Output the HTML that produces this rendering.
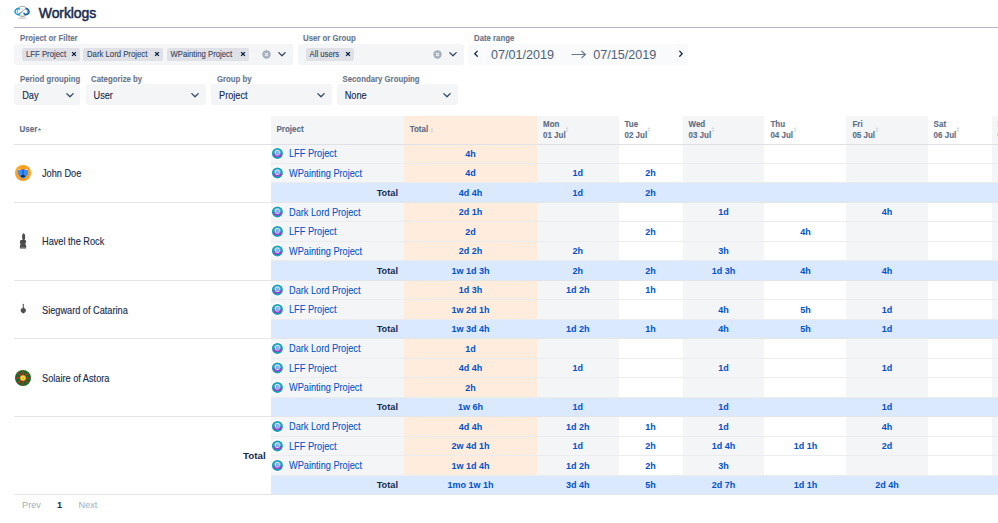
<!DOCTYPE html><html><head><meta charset="utf-8"><style>
*{box-sizing:border-box;margin:0;padding:0}
html,body{width:998px;height:523px;overflow:hidden;background:#fff;font-family:"Liberation Sans",sans-serif;position:relative}
.a{position:absolute}
.t{position:absolute;white-space:nowrap;line-height:1}
.lbl{font-size:7.8px;font-weight:700;color:#6b778c;transform:scaleY(1.12);transform-origin:0 65%;-webkit-text-stroke:0.12px #6b778c}
.box{position:absolute;background:#f4f5f7;border-radius:3px}
.chip{position:absolute;background:#dfe1e6;border-radius:2px;font-size:7.75px;color:#344563;line-height:13px;padding-left:4px;padding-top:0.4px;white-space:nowrap}
.chip span{display:inline-block;transform:scaleY(1.1);transform-origin:0 60%;-webkit-text-stroke:0.1px #344563}
.seltxt{font-size:9.2px;color:#172b4d;transform:scaleY(1.14);transform-origin:0 50%;-webkit-text-stroke:0.12px #172b4d}
.v{position:absolute;font-size:9px;font-weight:700;color:#0052cc;text-align:center;white-space:nowrap;line-height:19.5px;padding-top:0.5px}
.pn{position:absolute;font-size:9.2px;color:#0052cc;white-space:nowrap;line-height:19.5px;padding-top:1px;transform:scaleY(1.1);transform-origin:0 50%;-webkit-text-stroke:0.07px #0052cc}
.hd{font-size:8px;font-weight:700;color:#5e6c84;transform:scaleY(1.12);transform-origin:0 50%;-webkit-text-stroke:0.1px #5e6c84}
</style></head><body>
<svg class="a" style="left:10px;top:2px" width="26" height="22" viewBox="0 0 26 22">
<ellipse cx="12.2" cy="16.2" rx="4.2" ry="1.1" fill="#cfcfcf" opacity="0.8"/>
<circle cx="12.4" cy="9.3" r="5.1" fill="none" stroke="#a3a3a3" stroke-width="1.1"/>
<path d="M10 7.5 A2.9 2.9 0 1 0 10 11.7" fill="none" stroke="#1fa0de" stroke-width="1.4"/>
<path d="M9.4 11.8 L11.6 9.9" stroke="#39b0e8" stroke-width="1.3" stroke-linecap="round"/>
<path d="M10 12 L15.2 7" stroke="#a8a8a8" stroke-width="0.9"/>
<path d="M13.6 10.8 A2.8 2.8 0 1 0 15.4 7" fill="none" stroke="#0b5aa8" stroke-width="1.4"/>
<path d="M11.2 6.6 L13.4 8.6" stroke="#b0b0b0" stroke-width="0.8"/>
</svg>
<div class="t" style="left:38.8px;top:6px;font-size:14px;letter-spacing:-0.1px;-webkit-text-stroke:0.5px #172b4d;color:#172b4d">Worklogs</div>
<div class="a" style="left:14px;top:27px;width:984px;height:1px;background:#b3bac5"></div>
<div class="t lbl" style="left:20px;top:35.4px">Project or Filter</div>
<div class="t lbl" style="left:303px;top:35.4px">User or Group</div>
<div class="t lbl" style="left:474px;top:35.4px">Date range</div>
<div class="box" style="left:14px;top:44px;width:279px;height:21px"></div>
<div class="chip" style="left:22px;top:48px;width:58px;height:13px"><span>LFF Project</span></div>
<svg class="a" style="left:71px;top:51.2px" width="6" height="6" viewBox="0 0 6 6"><path d="M1.1 1.1L4.9 4.9M4.9 1.1L1.1 4.9" stroke="#091e42" stroke-width="1.3"/></svg>
<div class="chip" style="left:83px;top:48px;width:80px;height:13px"><span>Dark Lord Project</span></div>
<svg class="a" style="left:154px;top:51.2px" width="6" height="6" viewBox="0 0 6 6"><path d="M1.1 1.1L4.9 4.9M4.9 1.1L1.1 4.9" stroke="#091e42" stroke-width="1.3"/></svg>
<div class="chip" style="left:166.5px;top:48px;width:82px;height:13px"><span>WPainting Project</span></div>
<svg class="a" style="left:239.5px;top:51.2px" width="6" height="6" viewBox="0 0 6 6"><path d="M1.1 1.1L4.9 4.9M4.9 1.1L1.1 4.9" stroke="#091e42" stroke-width="1.3"/></svg>
<svg class="a" style="left:261.5px;top:50.0px" width="9" height="9" viewBox="0 0 9 9"><circle cx="4.5" cy="4.5" r="4.2" fill="#a5adba"/><path d="M2.9 2.9L6.1 6.1M6.1 2.9L2.9 6.1" stroke="#f4f5f7" stroke-width="1.1"/></svg>
<svg class="a" style="left:277px;top:51.0px" width="10" height="7" viewBox="0 0 10 7"><path d="M1.8 1.6L5 4.8L8.2 1.6" fill="none" stroke="#344563" stroke-width="1.3" stroke-linecap="round" stroke-linejoin="round"/></svg>
<div class="box" style="left:297.5px;top:44px;width:166px;height:21px"></div>
<div class="chip" style="left:305.5px;top:48px;width:48px;height:13px"><span>All users</span></div>
<svg class="a" style="left:344.5px;top:51.2px" width="6" height="6" viewBox="0 0 6 6"><path d="M1.1 1.1L4.9 4.9M4.9 1.1L1.1 4.9" stroke="#091e42" stroke-width="1.3"/></svg>
<svg class="a" style="left:432.5px;top:50.0px" width="9" height="9" viewBox="0 0 9 9"><circle cx="4.5" cy="4.5" r="4.2" fill="#a5adba"/><path d="M2.9 2.9L6.1 6.1M6.1 2.9L2.9 6.1" stroke="#f4f5f7" stroke-width="1.1"/></svg>
<svg class="a" style="left:448px;top:51.0px" width="10" height="7" viewBox="0 0 10 7"><path d="M1.8 1.6L5 4.8L8.2 1.6" fill="none" stroke="#344563" stroke-width="1.3" stroke-linecap="round" stroke-linejoin="round"/></svg>
<div class="box" style="left:468px;top:44px;width:14.5px;height:20.5px;border-radius:3px 0 0 3px;background:#f9fafb"></div>
<div class="box" style="left:483.5px;top:44px;width:189px;height:20.5px;border-radius:0;background:#f9fafb"></div>
<div class="box" style="left:673.5px;top:44px;width:14px;height:20.5px;border-radius:0 3px 3px 0;background:#f9fafb"></div>
<svg class="a" style="left:472.6px;top:50px" width="6" height="8" viewBox="0 0 6 8"><path d="M4.3 1.1L1.8 3.7L4.3 6.2" fill="none" stroke="#172b4d" stroke-width="1.3" stroke-linecap="round"/></svg>
<svg class="a" style="left:677.6px;top:50px" width="6" height="8" viewBox="0 0 6 8"><path d="M1.7 1.1L4.2 3.7L1.7 6.2" fill="none" stroke="#172b4d" stroke-width="1.3" stroke-linecap="round"/></svg>
<div class="t" style="left:491px;top:48.6px;font-size:12.6px;color:#505f79">07/01/2019</div>
<svg class="a" style="left:570.5px;top:50px" width="16" height="9" viewBox="0 0 16 9"><path d="M0.5 4.5H14.5M10.5 1L14.5 4.5L10.5 8" fill="none" stroke="#6b778c" stroke-width="1.1"/></svg>
<div class="t" style="left:593.3px;top:48.6px;font-size:12.6px;color:#505f79">07/15/2019</div>
<div class="t lbl" style="left:20px;top:75.9px">Period grouping</div>
<div class="t lbl" style="left:91px;top:75.9px">Categorize by</div>
<div class="t lbl" style="left:217px;top:75.9px">Group by</div>
<div class="t lbl" style="left:342.5px;top:75.9px">Secondary Grouping</div>
<div class="box" style="left:14px;top:84.3px;width:66px;height:21px"></div>
<div class="t seltxt" style="left:22.2px;top:91.6px">Day</div>
<svg class="a" style="left:65px;top:91.5px" width="10" height="7" viewBox="0 0 10 7"><path d="M1.8 1.6L5 4.8L8.2 1.6" fill="none" stroke="#344563" stroke-width="1.3" stroke-linecap="round" stroke-linejoin="round"/></svg>
<div class="box" style="left:85.5px;top:84.3px;width:120.5px;height:21px"></div>
<div class="t seltxt" style="left:93.5px;top:91.6px">User</div>
<svg class="a" style="left:190.2px;top:91.5px" width="10" height="7" viewBox="0 0 10 7"><path d="M1.8 1.6L5 4.8L8.2 1.6" fill="none" stroke="#344563" stroke-width="1.3" stroke-linecap="round" stroke-linejoin="round"/></svg>
<div class="box" style="left:211px;top:84.3px;width:120.80000000000001px;height:21px"></div>
<div class="t seltxt" style="left:219px;top:91.6px">Project</div>
<svg class="a" style="left:316px;top:91.5px" width="10" height="7" viewBox="0 0 10 7"><path d="M1.8 1.6L5 4.8L8.2 1.6" fill="none" stroke="#344563" stroke-width="1.3" stroke-linecap="round" stroke-linejoin="round"/></svg>
<div class="box" style="left:336.6px;top:84.3px;width:121.19999999999999px;height:21px"></div>
<div class="t seltxt" style="left:344.7px;top:91.6px">None</div>
<svg class="a" style="left:441.8px;top:91.5px" width="10" height="7" viewBox="0 0 10 7"><path d="M1.8 1.6L5 4.8L8.2 1.6" fill="none" stroke="#344563" stroke-width="1.3" stroke-linecap="round" stroke-linejoin="round"/></svg>
<div class="a" style="left:271px;top:116px;width:133px;height:28px;background:#f4f5f7"></div>
<div class="a" style="left:404px;top:116px;width:133px;height:28px;background:#ffecdc"></div>
<div class="a" style="left:537px;top:116px;width:81.5px;height:28px;background:#f4f5f7"></div>
<div class="a" style="left:618.5px;top:116px;width:64.0px;height:28px;background:#fff"></div>
<div class="a" style="left:682.5px;top:116px;width:81.89999999999998px;height:28px;background:#f4f5f7"></div>
<div class="a" style="left:764.4px;top:116px;width:82.0px;height:28px;background:#fff"></div>
<div class="a" style="left:846.4px;top:116px;width:81.20000000000005px;height:28px;background:#f4f5f7"></div>
<div class="a" style="left:927.6px;top:116px;width:64.39999999999998px;height:28px;background:#fff"></div>
<div class="a" style="left:992px;top:116px;width:68px;height:28px;background:#f4f5f7"></div>
<svg class="a" style="left:15.2px;top:164.8px" width="16" height="16" viewBox="0 0 16 16"><circle cx="8" cy="8" r="8" fill="#ffa01e"/><path d="M2.9 4.8 L5.2 5.2 L6.6 4.4 L9.4 4.4 L10.8 5.2 L13.1 4.8 L12.7 9.4 L10.8 12 L9.4 13.3 L6.6 13.3 L5.2 12 L3.3 9.4 Z" fill="#3a8cf2"/><rect x="7" y="4.4" width="2" height="5.6" fill="#1c6be6"/><path d="M3 4.3 L5.2 4.7 M13 4.3 L10.8 4.7" stroke="#fff3e0" stroke-width="0.8"/><ellipse cx="8" cy="11.2" rx="2.1" ry="1.1" fill="#13233a"/><path d="M6.8 12.2 L9.2 12.2 L8.8 13.4 L7.2 13.4 Z" fill="#2f86f0"/></svg>
<div class="t" style="left:42px;top:170.15px;font-size:9.2px;color:#172b4d;transform:scaleY(1.1);transform-origin:0 50%;-webkit-text-stroke:0.12px #172b4d">John Doe</div>
<div class="a" style="left:271px;top:144.0px;width:133px;height:19.5px;background:#f4f5f7"></div>
<div class="a" style="left:404px;top:144.0px;width:133px;height:19.5px;background:#ffecdc"></div>
<div class="a" style="left:537px;top:144.0px;width:81.5px;height:19.5px;background:#f4f5f7"></div>
<div class="a" style="left:682.5px;top:144.0px;width:81.89999999999998px;height:19.5px;background:#f4f5f7"></div>
<div class="a" style="left:846.4px;top:144.0px;width:81.20000000000005px;height:19.5px;background:#f4f5f7"></div>
<div class="a" style="left:992px;top:144.0px;width:68px;height:19.5px;background:#f4f5f7"></div>
<svg class="a" style="left:270px;top:146px" width="15" height="15" viewBox="0 0 15 15"><g transform="translate(0.40 0.40)"><circle cx="7" cy="7" r="6.8" fill="#fff"/><circle cx="7" cy="7" r="5.5" fill="#13a2b6"/><circle cx="7" cy="6.6" r="3.6" fill="#5fb8d8"/><ellipse cx="7" cy="8.5" rx="3.7" ry="2.2" fill="#9342c9"/><rect x="4.7" y="3.6" width="4.6" height="5.6" rx="2.2" fill="#eef4ff"/><rect x="5.4" y="4.3" width="3.2" height="4.2" rx="1.5" fill="#76aaf0"/><circle cx="7" cy="6.2" r="0.6" fill="#f0b0d8"/></g></svg>
<div class="pn" style="left:289px;top:144.0px">LFF Project</div>
<div class="v" style="left:404px;top:144.0px;width:133px">4h</div>
<div class="a" style="left:271px;top:162.5px;width:727px;height:1px;background:#ebecf0"></div>
<div class="a" style="left:271px;top:163.5px;width:133px;height:19.5px;background:#f4f5f7"></div>
<div class="a" style="left:404px;top:163.5px;width:133px;height:19.5px;background:#ffecdc"></div>
<div class="a" style="left:537px;top:163.5px;width:81.5px;height:19.5px;background:#f4f5f7"></div>
<div class="a" style="left:682.5px;top:163.5px;width:81.89999999999998px;height:19.5px;background:#f4f5f7"></div>
<div class="a" style="left:846.4px;top:163.5px;width:81.20000000000005px;height:19.5px;background:#f4f5f7"></div>
<div class="a" style="left:992px;top:163.5px;width:68px;height:19.5px;background:#f4f5f7"></div>
<svg class="a" style="left:270px;top:165px" width="15" height="15" viewBox="0 0 15 15"><g transform="translate(0.40 0.90)"><circle cx="7" cy="7" r="6.8" fill="#fff"/><circle cx="7" cy="7" r="5.5" fill="#13a2b6"/><circle cx="7" cy="6.6" r="3.6" fill="#5fb8d8"/><ellipse cx="7" cy="8.5" rx="3.7" ry="2.2" fill="#9342c9"/><rect x="4.7" y="3.6" width="4.6" height="5.6" rx="2.2" fill="#eef4ff"/><rect x="5.4" y="4.3" width="3.2" height="4.2" rx="1.5" fill="#76aaf0"/><circle cx="7" cy="6.2" r="0.6" fill="#f0b0d8"/></g></svg>
<div class="pn" style="left:289px;top:163.5px">WPainting Project</div>
<div class="v" style="left:404px;top:163.5px;width:133px">4d</div>
<div class="v" style="left:537px;top:163.5px;width:81.5px">1d</div>
<div class="v" style="left:618.5px;top:163.5px;width:64.0px">2h</div>
<div class="a" style="left:271px;top:182.0px;width:727px;height:1px;background:#ebecf0"></div>
<div class="a" style="left:271px;top:183.0px;width:727px;height:19.5px;background:#dae9fd"></div>
<div class="t" style="left:376.7px;top:188.5px;font-size:9.2px;font-weight:700;color:#172b4d">Total</div>
<div class="v" style="left:404px;top:183.0px;width:133px">4d 4h</div>
<div class="v" style="left:537px;top:183.0px;width:81.5px">1d</div>
<div class="v" style="left:618.5px;top:183.0px;width:64.0px">2h</div>
<div class="a" style="left:14px;top:201.5px;width:984px;height:1px;background:#e3e5e9"></div>
<svg class="a" style="left:10px;top:225px" width="20" height="30" viewBox="0 0 20 30"><path d="M13.7 8.2 C14.8 8.4 15.2 10 15.2 12 C15.2 13.8 14.8 14.8 14.4 15.2 L12.8 15.2 C12.2 14.4 12.1 13 12.1 11.6 C12.1 9.6 12.6 8.2 13.7 8.2 Z" fill="#4e4e4e"/><path d="M10.4 15.3 C11.6 14.9 15 14.9 16 15.5 L16.2 17.2 C15.3 17.9 15.1 18.8 15.6 19.8 L16.3 21.6 L16.1 23.6 L10 23.6 L9.8 21.5 C10.6 20.2 10.6 18.6 9.8 17.2 Z" fill="#484848"/><path d="M10.2 22.4 H15.8" stroke="#9a9a9a" stroke-width="0.6"/><path d="M11 18 H14.6 M11 20 H14.4" stroke="#666" stroke-width="0.5"/></svg>
<div class="t" style="left:42px;top:238.4px;font-size:9.2px;color:#172b4d;transform:scaleY(1.1);transform-origin:0 50%;-webkit-text-stroke:0.12px #172b4d">Havel the Rock</div>
<div class="a" style="left:271px;top:202.5px;width:133px;height:19.5px;background:#f4f5f7"></div>
<div class="a" style="left:404px;top:202.5px;width:133px;height:19.5px;background:#ffecdc"></div>
<div class="a" style="left:537px;top:202.5px;width:81.5px;height:19.5px;background:#f4f5f7"></div>
<div class="a" style="left:682.5px;top:202.5px;width:81.89999999999998px;height:19.5px;background:#f4f5f7"></div>
<div class="a" style="left:846.4px;top:202.5px;width:81.20000000000005px;height:19.5px;background:#f4f5f7"></div>
<div class="a" style="left:992px;top:202.5px;width:68px;height:19.5px;background:#f4f5f7"></div>
<svg class="a" style="left:270px;top:204px" width="15" height="15" viewBox="0 0 15 15"><g transform="translate(0.40 0.90)"><circle cx="7" cy="7" r="6.8" fill="#fff"/><circle cx="7" cy="7" r="5.5" fill="#13a2b6"/><circle cx="7" cy="6.6" r="3.6" fill="#5fb8d8"/><ellipse cx="7" cy="8.5" rx="3.7" ry="2.2" fill="#9342c9"/><rect x="4.7" y="3.6" width="4.6" height="5.6" rx="2.2" fill="#eef4ff"/><rect x="5.4" y="4.3" width="3.2" height="4.2" rx="1.5" fill="#76aaf0"/><circle cx="7" cy="6.2" r="0.6" fill="#f0b0d8"/></g></svg>
<div class="pn" style="left:289px;top:202.5px">Dark Lord Project</div>
<div class="v" style="left:404px;top:202.5px;width:133px">2d 1h</div>
<div class="v" style="left:682.5px;top:202.5px;width:81.89999999999998px">1d</div>
<div class="v" style="left:846.4px;top:202.5px;width:81.20000000000005px">4h</div>
<div class="a" style="left:271px;top:221.0px;width:727px;height:1px;background:#ebecf0"></div>
<div class="a" style="left:271px;top:222.0px;width:133px;height:19.5px;background:#f4f5f7"></div>
<div class="a" style="left:404px;top:222.0px;width:133px;height:19.5px;background:#ffecdc"></div>
<div class="a" style="left:537px;top:222.0px;width:81.5px;height:19.5px;background:#f4f5f7"></div>
<div class="a" style="left:682.5px;top:222.0px;width:81.89999999999998px;height:19.5px;background:#f4f5f7"></div>
<div class="a" style="left:846.4px;top:222.0px;width:81.20000000000005px;height:19.5px;background:#f4f5f7"></div>
<div class="a" style="left:992px;top:222.0px;width:68px;height:19.5px;background:#f4f5f7"></div>
<svg class="a" style="left:270px;top:224px" width="15" height="15" viewBox="0 0 15 15"><g transform="translate(0.40 0.40)"><circle cx="7" cy="7" r="6.8" fill="#fff"/><circle cx="7" cy="7" r="5.5" fill="#13a2b6"/><circle cx="7" cy="6.6" r="3.6" fill="#5fb8d8"/><ellipse cx="7" cy="8.5" rx="3.7" ry="2.2" fill="#9342c9"/><rect x="4.7" y="3.6" width="4.6" height="5.6" rx="2.2" fill="#eef4ff"/><rect x="5.4" y="4.3" width="3.2" height="4.2" rx="1.5" fill="#76aaf0"/><circle cx="7" cy="6.2" r="0.6" fill="#f0b0d8"/></g></svg>
<div class="pn" style="left:289px;top:222.0px">LFF Project</div>
<div class="v" style="left:404px;top:222.0px;width:133px">2d</div>
<div class="v" style="left:618.5px;top:222.0px;width:64.0px">2h</div>
<div class="v" style="left:764.4px;top:222.0px;width:82.0px">4h</div>
<div class="a" style="left:271px;top:240.5px;width:727px;height:1px;background:#ebecf0"></div>
<div class="a" style="left:271px;top:241.5px;width:133px;height:19.5px;background:#f4f5f7"></div>
<div class="a" style="left:404px;top:241.5px;width:133px;height:19.5px;background:#ffecdc"></div>
<div class="a" style="left:537px;top:241.5px;width:81.5px;height:19.5px;background:#f4f5f7"></div>
<div class="a" style="left:682.5px;top:241.5px;width:81.89999999999998px;height:19.5px;background:#f4f5f7"></div>
<div class="a" style="left:846.4px;top:241.5px;width:81.20000000000005px;height:19.5px;background:#f4f5f7"></div>
<div class="a" style="left:992px;top:241.5px;width:68px;height:19.5px;background:#f4f5f7"></div>
<svg class="a" style="left:270px;top:243px" width="15" height="15" viewBox="0 0 15 15"><g transform="translate(0.40 0.90)"><circle cx="7" cy="7" r="6.8" fill="#fff"/><circle cx="7" cy="7" r="5.5" fill="#13a2b6"/><circle cx="7" cy="6.6" r="3.6" fill="#5fb8d8"/><ellipse cx="7" cy="8.5" rx="3.7" ry="2.2" fill="#9342c9"/><rect x="4.7" y="3.6" width="4.6" height="5.6" rx="2.2" fill="#eef4ff"/><rect x="5.4" y="4.3" width="3.2" height="4.2" rx="1.5" fill="#76aaf0"/><circle cx="7" cy="6.2" r="0.6" fill="#f0b0d8"/></g></svg>
<div class="pn" style="left:289px;top:241.5px">WPainting Project</div>
<div class="v" style="left:404px;top:241.5px;width:133px">2d 2h</div>
<div class="v" style="left:537px;top:241.5px;width:81.5px">2h</div>
<div class="v" style="left:682.5px;top:241.5px;width:81.89999999999998px">3h</div>
<div class="a" style="left:271px;top:260.0px;width:727px;height:1px;background:#ebecf0"></div>
<div class="a" style="left:271px;top:261.0px;width:727px;height:19.5px;background:#dae9fd"></div>
<div class="t" style="left:376.7px;top:266.5px;font-size:9.2px;font-weight:700;color:#172b4d">Total</div>
<div class="v" style="left:404px;top:261.0px;width:133px">1w 1d 3h</div>
<div class="v" style="left:537px;top:261.0px;width:81.5px">2h</div>
<div class="v" style="left:618.5px;top:261.0px;width:64.0px">2h</div>
<div class="v" style="left:682.5px;top:261.0px;width:81.89999999999998px">1d 3h</div>
<div class="v" style="left:764.4px;top:261.0px;width:82.0px">4h</div>
<div class="v" style="left:846.4px;top:261.0px;width:81.20000000000005px">4h</div>
<div class="a" style="left:14px;top:279.5px;width:984px;height:1px;background:#e3e5e9"></div>
<svg class="a" style="left:10px;top:295px" width="20" height="30" viewBox="0 0 20 30"><path d="M13.3 9 V13" stroke="#4e4e4e" stroke-width="1"/><path d="M12.4 9.3 H14.2" stroke="#777" stroke-width="0.6"/><path d="M13.3 12.4 C15.2 13.2 16 14.2 16 15.4 C16 16.6 14.6 17.6 13.3 18.6 C12 17.6 10.6 16.6 10.6 15.4 C10.6 14.2 11.4 13.2 13.3 12.4 Z" fill="#505050"/></svg>
<div class="t" style="left:42px;top:306.65px;font-size:9.2px;color:#172b4d;transform:scaleY(1.1);transform-origin:0 50%;-webkit-text-stroke:0.12px #172b4d">Siegward of Catarina</div>
<div class="a" style="left:271px;top:280.5px;width:133px;height:19.5px;background:#f4f5f7"></div>
<div class="a" style="left:404px;top:280.5px;width:133px;height:19.5px;background:#ffecdc"></div>
<div class="a" style="left:537px;top:280.5px;width:81.5px;height:19.5px;background:#f4f5f7"></div>
<div class="a" style="left:682.5px;top:280.5px;width:81.89999999999998px;height:19.5px;background:#f4f5f7"></div>
<div class="a" style="left:846.4px;top:280.5px;width:81.20000000000005px;height:19.5px;background:#f4f5f7"></div>
<div class="a" style="left:992px;top:280.5px;width:68px;height:19.5px;background:#f4f5f7"></div>
<svg class="a" style="left:270px;top:282px" width="15" height="15" viewBox="0 0 15 15"><g transform="translate(0.40 0.90)"><circle cx="7" cy="7" r="6.8" fill="#fff"/><circle cx="7" cy="7" r="5.5" fill="#13a2b6"/><circle cx="7" cy="6.6" r="3.6" fill="#5fb8d8"/><ellipse cx="7" cy="8.5" rx="3.7" ry="2.2" fill="#9342c9"/><rect x="4.7" y="3.6" width="4.6" height="5.6" rx="2.2" fill="#eef4ff"/><rect x="5.4" y="4.3" width="3.2" height="4.2" rx="1.5" fill="#76aaf0"/><circle cx="7" cy="6.2" r="0.6" fill="#f0b0d8"/></g></svg>
<div class="pn" style="left:289px;top:280.5px">Dark Lord Project</div>
<div class="v" style="left:404px;top:280.5px;width:133px">1d 3h</div>
<div class="v" style="left:537px;top:280.5px;width:81.5px">1d 2h</div>
<div class="v" style="left:618.5px;top:280.5px;width:64.0px">1h</div>
<div class="a" style="left:271px;top:299.0px;width:727px;height:1px;background:#ebecf0"></div>
<div class="a" style="left:271px;top:300.0px;width:133px;height:19.5px;background:#f4f5f7"></div>
<div class="a" style="left:404px;top:300.0px;width:133px;height:19.5px;background:#ffecdc"></div>
<div class="a" style="left:537px;top:300.0px;width:81.5px;height:19.5px;background:#f4f5f7"></div>
<div class="a" style="left:682.5px;top:300.0px;width:81.89999999999998px;height:19.5px;background:#f4f5f7"></div>
<div class="a" style="left:846.4px;top:300.0px;width:81.20000000000005px;height:19.5px;background:#f4f5f7"></div>
<div class="a" style="left:992px;top:300.0px;width:68px;height:19.5px;background:#f4f5f7"></div>
<svg class="a" style="left:270px;top:302px" width="15" height="15" viewBox="0 0 15 15"><g transform="translate(0.40 0.40)"><circle cx="7" cy="7" r="6.8" fill="#fff"/><circle cx="7" cy="7" r="5.5" fill="#13a2b6"/><circle cx="7" cy="6.6" r="3.6" fill="#5fb8d8"/><ellipse cx="7" cy="8.5" rx="3.7" ry="2.2" fill="#9342c9"/><rect x="4.7" y="3.6" width="4.6" height="5.6" rx="2.2" fill="#eef4ff"/><rect x="5.4" y="4.3" width="3.2" height="4.2" rx="1.5" fill="#76aaf0"/><circle cx="7" cy="6.2" r="0.6" fill="#f0b0d8"/></g></svg>
<div class="pn" style="left:289px;top:300.0px">LFF Project</div>
<div class="v" style="left:404px;top:300.0px;width:133px">1w 2d 1h</div>
<div class="v" style="left:682.5px;top:300.0px;width:81.89999999999998px">4h</div>
<div class="v" style="left:764.4px;top:300.0px;width:82.0px">5h</div>
<div class="v" style="left:846.4px;top:300.0px;width:81.20000000000005px">1d</div>
<div class="a" style="left:271px;top:318.5px;width:727px;height:1px;background:#ebecf0"></div>
<div class="a" style="left:271px;top:319.5px;width:727px;height:19.5px;background:#dae9fd"></div>
<div class="t" style="left:376.7px;top:325.0px;font-size:9.2px;font-weight:700;color:#172b4d">Total</div>
<div class="v" style="left:404px;top:319.5px;width:133px">1w 3d 4h</div>
<div class="v" style="left:537px;top:319.5px;width:81.5px">1d 2h</div>
<div class="v" style="left:618.5px;top:319.5px;width:64.0px">1h</div>
<div class="v" style="left:682.5px;top:319.5px;width:81.89999999999998px">4h</div>
<div class="v" style="left:764.4px;top:319.5px;width:82.0px">5h</div>
<div class="v" style="left:846.4px;top:319.5px;width:81.20000000000005px">1d</div>
<div class="a" style="left:14px;top:338.0px;width:984px;height:1px;background:#e3e5e9"></div>
<svg class="a" style="left:15.2px;top:369.8px" width="16" height="16" viewBox="0 0 16 16"><circle cx="8" cy="8" r="8" fill="#136b2a"/><path d="M8 8 L8.00 0.60" stroke="#d9261c" stroke-width="1.2"/><path d="M8 8 L13.23 2.77" stroke="#d9261c" stroke-width="1.2"/><path d="M8 8 L15.40 8.00" stroke="#d9261c" stroke-width="1.2"/><path d="M8 8 L13.23 13.23" stroke="#d9261c" stroke-width="1.2"/><path d="M8 8 L8.00 15.40" stroke="#d9261c" stroke-width="1.2"/><path d="M8 8 L2.77 13.23" stroke="#d9261c" stroke-width="1.2"/><path d="M8 8 L0.60 8.00" stroke="#d9261c" stroke-width="1.2"/><path d="M8 8 L2.77 2.77" stroke="#d9261c" stroke-width="1.2"/><circle cx="8" cy="8" r="2.8" fill="#f5d53c"/><path d="M7 8 L8 9 L9.4 6.8" fill="none" stroke="#c9a21a" stroke-width="0.6"/></svg>
<div class="t" style="left:42px;top:374.9px;font-size:9.2px;color:#172b4d;transform:scaleY(1.1);transform-origin:0 50%;-webkit-text-stroke:0.12px #172b4d">Solaire of Astora</div>
<div class="a" style="left:271px;top:339.0px;width:133px;height:19.5px;background:#f4f5f7"></div>
<div class="a" style="left:404px;top:339.0px;width:133px;height:19.5px;background:#ffecdc"></div>
<div class="a" style="left:537px;top:339.0px;width:81.5px;height:19.5px;background:#f4f5f7"></div>
<div class="a" style="left:682.5px;top:339.0px;width:81.89999999999998px;height:19.5px;background:#f4f5f7"></div>
<div class="a" style="left:846.4px;top:339.0px;width:81.20000000000005px;height:19.5px;background:#f4f5f7"></div>
<div class="a" style="left:992px;top:339.0px;width:68px;height:19.5px;background:#f4f5f7"></div>
<svg class="a" style="left:270px;top:341px" width="15" height="15" viewBox="0 0 15 15"><g transform="translate(0.40 0.40)"><circle cx="7" cy="7" r="6.8" fill="#fff"/><circle cx="7" cy="7" r="5.5" fill="#13a2b6"/><circle cx="7" cy="6.6" r="3.6" fill="#5fb8d8"/><ellipse cx="7" cy="8.5" rx="3.7" ry="2.2" fill="#9342c9"/><rect x="4.7" y="3.6" width="4.6" height="5.6" rx="2.2" fill="#eef4ff"/><rect x="5.4" y="4.3" width="3.2" height="4.2" rx="1.5" fill="#76aaf0"/><circle cx="7" cy="6.2" r="0.6" fill="#f0b0d8"/></g></svg>
<div class="pn" style="left:289px;top:339.0px">Dark Lord Project</div>
<div class="v" style="left:404px;top:339.0px;width:133px">1d</div>
<div class="a" style="left:271px;top:357.5px;width:727px;height:1px;background:#ebecf0"></div>
<div class="a" style="left:271px;top:358.5px;width:133px;height:19.5px;background:#f4f5f7"></div>
<div class="a" style="left:404px;top:358.5px;width:133px;height:19.5px;background:#ffecdc"></div>
<div class="a" style="left:537px;top:358.5px;width:81.5px;height:19.5px;background:#f4f5f7"></div>
<div class="a" style="left:682.5px;top:358.5px;width:81.89999999999998px;height:19.5px;background:#f4f5f7"></div>
<div class="a" style="left:846.4px;top:358.5px;width:81.20000000000005px;height:19.5px;background:#f4f5f7"></div>
<div class="a" style="left:992px;top:358.5px;width:68px;height:19.5px;background:#f4f5f7"></div>
<svg class="a" style="left:270px;top:360px" width="15" height="15" viewBox="0 0 15 15"><g transform="translate(0.40 0.90)"><circle cx="7" cy="7" r="6.8" fill="#fff"/><circle cx="7" cy="7" r="5.5" fill="#13a2b6"/><circle cx="7" cy="6.6" r="3.6" fill="#5fb8d8"/><ellipse cx="7" cy="8.5" rx="3.7" ry="2.2" fill="#9342c9"/><rect x="4.7" y="3.6" width="4.6" height="5.6" rx="2.2" fill="#eef4ff"/><rect x="5.4" y="4.3" width="3.2" height="4.2" rx="1.5" fill="#76aaf0"/><circle cx="7" cy="6.2" r="0.6" fill="#f0b0d8"/></g></svg>
<div class="pn" style="left:289px;top:358.5px">LFF Project</div>
<div class="v" style="left:404px;top:358.5px;width:133px">4d 4h</div>
<div class="v" style="left:537px;top:358.5px;width:81.5px">1d</div>
<div class="v" style="left:682.5px;top:358.5px;width:81.89999999999998px">1d</div>
<div class="v" style="left:846.4px;top:358.5px;width:81.20000000000005px">1d</div>
<div class="a" style="left:271px;top:377.0px;width:727px;height:1px;background:#ebecf0"></div>
<div class="a" style="left:271px;top:378.0px;width:133px;height:19.5px;background:#f4f5f7"></div>
<div class="a" style="left:404px;top:378.0px;width:133px;height:19.5px;background:#ffecdc"></div>
<div class="a" style="left:537px;top:378.0px;width:81.5px;height:19.5px;background:#f4f5f7"></div>
<div class="a" style="left:682.5px;top:378.0px;width:81.89999999999998px;height:19.5px;background:#f4f5f7"></div>
<div class="a" style="left:846.4px;top:378.0px;width:81.20000000000005px;height:19.5px;background:#f4f5f7"></div>
<div class="a" style="left:992px;top:378.0px;width:68px;height:19.5px;background:#f4f5f7"></div>
<svg class="a" style="left:270px;top:380px" width="15" height="15" viewBox="0 0 15 15"><g transform="translate(0.40 0.40)"><circle cx="7" cy="7" r="6.8" fill="#fff"/><circle cx="7" cy="7" r="5.5" fill="#13a2b6"/><circle cx="7" cy="6.6" r="3.6" fill="#5fb8d8"/><ellipse cx="7" cy="8.5" rx="3.7" ry="2.2" fill="#9342c9"/><rect x="4.7" y="3.6" width="4.6" height="5.6" rx="2.2" fill="#eef4ff"/><rect x="5.4" y="4.3" width="3.2" height="4.2" rx="1.5" fill="#76aaf0"/><circle cx="7" cy="6.2" r="0.6" fill="#f0b0d8"/></g></svg>
<div class="pn" style="left:289px;top:378.0px">WPainting Project</div>
<div class="v" style="left:404px;top:378.0px;width:133px">2h</div>
<div class="a" style="left:271px;top:396.5px;width:727px;height:1px;background:#ebecf0"></div>
<div class="a" style="left:271px;top:397.5px;width:727px;height:19.5px;background:#dae9fd"></div>
<div class="t" style="left:376.7px;top:403.0px;font-size:9.2px;font-weight:700;color:#172b4d">Total</div>
<div class="v" style="left:404px;top:397.5px;width:133px">1w 6h</div>
<div class="v" style="left:537px;top:397.5px;width:81.5px">1d</div>
<div class="v" style="left:682.5px;top:397.5px;width:81.89999999999998px">1d</div>
<div class="v" style="left:846.4px;top:397.5px;width:81.20000000000005px">1d</div>
<div class="a" style="left:14px;top:416.0px;width:984px;height:1px;background:#e3e5e9"></div>
<div class="t" style="left:243px;top:451.2px;font-size:9.8px;font-weight:700;color:#172b4d">Total</div>
<div class="a" style="left:271px;top:417.0px;width:133px;height:19.5px;background:#f4f5f7"></div>
<div class="a" style="left:404px;top:417.0px;width:133px;height:19.5px;background:#ffecdc"></div>
<div class="a" style="left:537px;top:417.0px;width:81.5px;height:19.5px;background:#f4f5f7"></div>
<div class="a" style="left:682.5px;top:417.0px;width:81.89999999999998px;height:19.5px;background:#f4f5f7"></div>
<div class="a" style="left:846.4px;top:417.0px;width:81.20000000000005px;height:19.5px;background:#f4f5f7"></div>
<div class="a" style="left:992px;top:417.0px;width:68px;height:19.5px;background:#f4f5f7"></div>
<svg class="a" style="left:270px;top:419px" width="15" height="15" viewBox="0 0 15 15"><g transform="translate(0.40 0.40)"><circle cx="7" cy="7" r="6.8" fill="#fff"/><circle cx="7" cy="7" r="5.5" fill="#13a2b6"/><circle cx="7" cy="6.6" r="3.6" fill="#5fb8d8"/><ellipse cx="7" cy="8.5" rx="3.7" ry="2.2" fill="#9342c9"/><rect x="4.7" y="3.6" width="4.6" height="5.6" rx="2.2" fill="#eef4ff"/><rect x="5.4" y="4.3" width="3.2" height="4.2" rx="1.5" fill="#76aaf0"/><circle cx="7" cy="6.2" r="0.6" fill="#f0b0d8"/></g></svg>
<div class="pn" style="left:289px;top:417.0px">Dark Lord Project</div>
<div class="v" style="left:404px;top:417.0px;width:133px">4d 4h</div>
<div class="v" style="left:537px;top:417.0px;width:81.5px">1d 2h</div>
<div class="v" style="left:618.5px;top:417.0px;width:64.0px">1h</div>
<div class="v" style="left:682.5px;top:417.0px;width:81.89999999999998px">1d</div>
<div class="v" style="left:846.4px;top:417.0px;width:81.20000000000005px">4h</div>
<div class="a" style="left:271px;top:435.5px;width:727px;height:1px;background:#ebecf0"></div>
<div class="a" style="left:271px;top:436.5px;width:133px;height:19.5px;background:#f4f5f7"></div>
<div class="a" style="left:404px;top:436.5px;width:133px;height:19.5px;background:#ffecdc"></div>
<div class="a" style="left:537px;top:436.5px;width:81.5px;height:19.5px;background:#f4f5f7"></div>
<div class="a" style="left:682.5px;top:436.5px;width:81.89999999999998px;height:19.5px;background:#f4f5f7"></div>
<div class="a" style="left:846.4px;top:436.5px;width:81.20000000000005px;height:19.5px;background:#f4f5f7"></div>
<div class="a" style="left:992px;top:436.5px;width:68px;height:19.5px;background:#f4f5f7"></div>
<svg class="a" style="left:270px;top:438px" width="15" height="15" viewBox="0 0 15 15"><g transform="translate(0.40 0.90)"><circle cx="7" cy="7" r="6.8" fill="#fff"/><circle cx="7" cy="7" r="5.5" fill="#13a2b6"/><circle cx="7" cy="6.6" r="3.6" fill="#5fb8d8"/><ellipse cx="7" cy="8.5" rx="3.7" ry="2.2" fill="#9342c9"/><rect x="4.7" y="3.6" width="4.6" height="5.6" rx="2.2" fill="#eef4ff"/><rect x="5.4" y="4.3" width="3.2" height="4.2" rx="1.5" fill="#76aaf0"/><circle cx="7" cy="6.2" r="0.6" fill="#f0b0d8"/></g></svg>
<div class="pn" style="left:289px;top:436.5px">LFF Project</div>
<div class="v" style="left:404px;top:436.5px;width:133px">2w 4d 1h</div>
<div class="v" style="left:537px;top:436.5px;width:81.5px">1d</div>
<div class="v" style="left:618.5px;top:436.5px;width:64.0px">2h</div>
<div class="v" style="left:682.5px;top:436.5px;width:81.89999999999998px">1d 4h</div>
<div class="v" style="left:764.4px;top:436.5px;width:82.0px">1d 1h</div>
<div class="v" style="left:846.4px;top:436.5px;width:81.20000000000005px">2d</div>
<div class="a" style="left:271px;top:455.0px;width:727px;height:1px;background:#ebecf0"></div>
<div class="a" style="left:271px;top:456.0px;width:133px;height:19.5px;background:#f4f5f7"></div>
<div class="a" style="left:404px;top:456.0px;width:133px;height:19.5px;background:#ffecdc"></div>
<div class="a" style="left:537px;top:456.0px;width:81.5px;height:19.5px;background:#f4f5f7"></div>
<div class="a" style="left:682.5px;top:456.0px;width:81.89999999999998px;height:19.5px;background:#f4f5f7"></div>
<div class="a" style="left:846.4px;top:456.0px;width:81.20000000000005px;height:19.5px;background:#f4f5f7"></div>
<div class="a" style="left:992px;top:456.0px;width:68px;height:19.5px;background:#f4f5f7"></div>
<svg class="a" style="left:270px;top:458px" width="15" height="15" viewBox="0 0 15 15"><g transform="translate(0.40 0.40)"><circle cx="7" cy="7" r="6.8" fill="#fff"/><circle cx="7" cy="7" r="5.5" fill="#13a2b6"/><circle cx="7" cy="6.6" r="3.6" fill="#5fb8d8"/><ellipse cx="7" cy="8.5" rx="3.7" ry="2.2" fill="#9342c9"/><rect x="4.7" y="3.6" width="4.6" height="5.6" rx="2.2" fill="#eef4ff"/><rect x="5.4" y="4.3" width="3.2" height="4.2" rx="1.5" fill="#76aaf0"/><circle cx="7" cy="6.2" r="0.6" fill="#f0b0d8"/></g></svg>
<div class="pn" style="left:289px;top:456.0px">WPainting Project</div>
<div class="v" style="left:404px;top:456.0px;width:133px">1w 1d 4h</div>
<div class="v" style="left:537px;top:456.0px;width:81.5px">1d 2h</div>
<div class="v" style="left:618.5px;top:456.0px;width:64.0px">2h</div>
<div class="v" style="left:682.5px;top:456.0px;width:81.89999999999998px">3h</div>
<div class="a" style="left:271px;top:474.5px;width:727px;height:1px;background:#ebecf0"></div>
<div class="a" style="left:271px;top:475.5px;width:727px;height:19.5px;background:#dae9fd"></div>
<div class="t" style="left:376.7px;top:481.0px;font-size:9.2px;font-weight:700;color:#172b4d">Total</div>
<div class="v" style="left:404px;top:475.5px;width:133px">1mo 1w 1h</div>
<div class="v" style="left:537px;top:475.5px;width:81.5px">3d 4h</div>
<div class="v" style="left:618.5px;top:475.5px;width:64.0px">5h</div>
<div class="v" style="left:682.5px;top:475.5px;width:81.89999999999998px">2d 7h</div>
<div class="v" style="left:764.4px;top:475.5px;width:82.0px">1d 1h</div>
<div class="v" style="left:846.4px;top:475.5px;width:81.20000000000005px">2d 4h</div>
<div class="a" style="left:14px;top:494.0px;width:984px;height:1px;background:#e3e5e9"></div>
<div class="a" style="left:14px;top:144px;width:984px;height:1px;background:#dfe1e6"></div>
<div class="t hd" style="left:19.5px;top:126px">User</div>
<svg class="a" style="left:37.2px;top:126.6px" width="5" height="7" viewBox="0 0 5 7"><path d="M0.5 3.2L2.5 1.2L4.5 3.2Z" fill="#5e6c84"/><path d="M1 4.3L2.5 5.6L4 4.3Z" fill="#dfe1e6"/></svg>
<div class="t hd" style="left:276.5px;top:126px">Project</div>
<div class="t hd" style="left:409.7px;top:126px">Total</div>
<svg class="a" style="left:430px;top:127px" width="4" height="7" viewBox="0 0 4 7"><path d="M0.5 2.8L2 1.2L3.5 2.8Z M0.5 4.2L2 5.8L3.5 4.2Z" fill="#c1c7d0"/></svg>
<div class="t hd" style="left:543px;top:121.4px;color:#5e6c84">Mon</div>
<div class="t hd" style="left:543px;top:132.4px;color:#5e6c84">01 Jul</div>
<svg class="a" style="left:565.2px;top:125.5px" width="4" height="7" viewBox="0 0 4 7"><path d="M0.5 2.8L2 1.2L3.5 2.8Z M0.5 4.2L2 5.8L3.5 4.2Z" fill="#c1c7d0"/></svg>
<div class="t hd" style="left:624.5px;top:121.4px;color:#5e6c84">Tue</div>
<div class="t hd" style="left:624.5px;top:132.4px;color:#5e6c84">02 Jul</div>
<svg class="a" style="left:646.7px;top:125.5px" width="4" height="7" viewBox="0 0 4 7"><path d="M0.5 2.8L2 1.2L3.5 2.8Z M0.5 4.2L2 5.8L3.5 4.2Z" fill="#c1c7d0"/></svg>
<div class="t hd" style="left:688.5px;top:121.4px;color:#5e6c84">Wed</div>
<div class="t hd" style="left:688.5px;top:132.4px;color:#5e6c84">03 Jul</div>
<svg class="a" style="left:710.7px;top:125.5px" width="4" height="7" viewBox="0 0 4 7"><path d="M0.5 2.8L2 1.2L3.5 2.8Z M0.5 4.2L2 5.8L3.5 4.2Z" fill="#c1c7d0"/></svg>
<div class="t hd" style="left:770.4px;top:121.4px;color:#5e6c84">Thu</div>
<div class="t hd" style="left:770.4px;top:132.4px;color:#5e6c84">04 Jul</div>
<svg class="a" style="left:792.6px;top:125.5px" width="4" height="7" viewBox="0 0 4 7"><path d="M0.5 2.8L2 1.2L3.5 2.8Z M0.5 4.2L2 5.8L3.5 4.2Z" fill="#c1c7d0"/></svg>
<div class="t hd" style="left:852.4px;top:121.4px;color:#5e6c84">Fri</div>
<div class="t hd" style="left:852.4px;top:132.4px;color:#5e6c84">05 Jul</div>
<svg class="a" style="left:874.6px;top:125.5px" width="4" height="7" viewBox="0 0 4 7"><path d="M0.5 2.8L2 1.2L3.5 2.8Z M0.5 4.2L2 5.8L3.5 4.2Z" fill="#c1c7d0"/></svg>
<div class="t hd" style="left:933.6px;top:121.4px;color:#5e6c84">Sat</div>
<div class="t hd" style="left:933.6px;top:132.4px;color:#5e6c84">06 Jul</div>
<svg class="a" style="left:955.8000000000001px;top:125.5px" width="4" height="7" viewBox="0 0 4 7"><path d="M0.5 2.8L2 1.2L3.5 2.8Z M0.5 4.2L2 5.8L3.5 4.2Z" fill="#c1c7d0"/></svg>
<div class="t hd" style="left:997.4px;top:121.4px;color:#5e6c84">Sun</div>
<div class="t hd" style="left:997.4px;top:132.4px;color:#5e6c84">07 Jul</div>
<svg class="a" style="left:1019.6px;top:125.5px" width="4" height="7" viewBox="0 0 4 7"><path d="M0.5 2.8L2 1.2L3.5 2.8Z M0.5 4.2L2 5.8L3.5 4.2Z" fill="#c1c7d0"/></svg>
<div class="t" style="left:22px;top:500.6px;font-size:9.2px;color:#a5adba">Prev</div>
<div class="t" style="left:57px;top:500.6px;font-size:9.2px;font-weight:700;color:#172b4d">1</div>
<div class="t" style="left:78.5px;top:500.6px;font-size:9.2px;color:#a5adba">Next</div>
</body></html>
